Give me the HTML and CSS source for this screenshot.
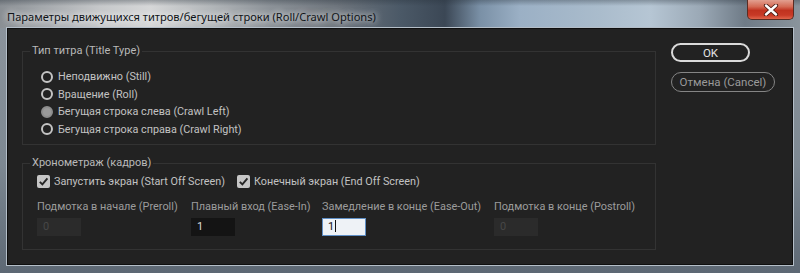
FILE: index.html
```html
<!DOCTYPE html>
<html lang="ru">
<head>
    <meta charset="UTF-8">
    <meta name="viewport" content="width=device-width, initial-scale=1.0">
    <title>Roll/Crawl Options</title>
    <link rel="stylesheet" href="styles.css">
</head>
<body>

    <div class="window">
        <div class="titlebar">
            <span class="title">Параметры движущихся титров/бегущей строки (Roll/Crawl Options)</span>
            <button type="button" class="close" aria-label="Close">
                <svg width="16" height="12" viewBox="0 0 16 12">
                    <path d="M3 1.5 L13 10.5 M13 1.5 L3 10.5" stroke="#4a1a12" stroke-width="4.2" stroke-linecap="round"/>
                    <path d="M3 1.5 L13 10.5 M13 1.5 L3 10.5" stroke="#ffffff" stroke-width="2.4" stroke-linecap="round"/>
                </svg>
            </button>
        </div>

        <div class="client">
            <div class="groups">
                <fieldset class="group type-group">
                    <legend>Тип титра (Title Type)</legend>
                    <div class="options">
                        <label class="radio"><span class="dot"></span>Неподвижно (Still)</label>
                        <label class="radio"><span class="dot"></span>Вращение (Roll)</label>
                        <label class="radio"><span class="dot selected"></span>Бегущая строка слева (Crawl Left)</label>
                        <label class="radio"><span class="dot"></span>Бегущая строка справа (Crawl Right)</label>
                    </div>
                </fieldset>

                <fieldset class="group timing-group">
                    <legend>Хронометраж (кадров)</legend>
                    <div class="checks">
                        <label class="check">
                            <span class="box">
                                <svg width="13" height="13" viewBox="0 0 13 13"><path d="M2.8 6.8 L5.4 9.4 L10.4 3.4" fill="none" stroke="#262626" stroke-width="1.9"/></svg>
                            </span>
                            Запустить экран (Start Off Screen)
                        </label>
                        <label class="check">
                            <span class="box">
                                <svg width="13" height="13" viewBox="0 0 13 13"><path d="M2.8 6.8 L5.4 9.4 L10.4 3.4" fill="none" stroke="#262626" stroke-width="1.9"/></svg>
                            </span>
                            Конечный экран (End Off Screen)
                        </label>
                    </div>

                    <div class="fields">
                        <div class="field-col">
                            <span class="field-label">Подмотка в начале (Preroll)</span>
                            <div class="field disabled">0</div>
                        </div>
                        <div class="field-col">
                            <span class="field-label">Плавный вход (Ease-In)</span>
                            <div class="field">1</div>
                        </div>
                        <div class="field-col">
                            <span class="field-label">Замедление в конце (Ease-Out)</span>
                            <div class="field focused">1<span class="caret"></span></div>
                        </div>
                        <div class="field-col">
                            <span class="field-label">Подмотка в конце (Postroll)</span>
                            <div class="field disabled">0</div>
                        </div>
                    </div>
                </fieldset>
            </div>

            <div class="buttons">
                <button type="button" class="btn ok">OK</button>
                <button type="button" class="btn cancel">Отмена (Cancel)</button>
            </div>
        </div>
    </div>

</body>
</html>
```

FILE: styles.css
```css
body {
    margin: 0;
    font-family: Roboto, "Noto Sans", sans-serif;
    background: #6f7a84;
}

.window {
    width: 800px;
    height: 273px;
    overflow: hidden;
    background: linear-gradient(180deg, #8e969e 0%, #7d8892 60%, #5d6874 100%);
}

/* blurred aero glass behind the caption */
.titlebar {
    height: 28px;
    display: flex;
    align-items: flex-start;
    background:
        linear-gradient(180deg, rgba(40, 50, 60, 0.35) 0px, rgba(40, 50, 60, 0) 6px),
        linear-gradient(90deg, #8a8f94 0px, #a3a7ab 40px, #c6c8ca 100px, #d6d7d8 150px, #b3b7ba 210px,
            #8c9298 270px, #6c737b 340px, #4b5967 400px, #3b4755 445px, #7a90a6 480px, #9bb0c5 520px,
            #aabccc 600px, #b6c6d4 650px, #9ba9b6 700px, #6f7b87 745px, #8a949c 800px);
}

.title {
    padding: 9px 0 0 7px;
    font-family: "Noto Sans", sans-serif;
    font-size: 11.1px;
    line-height: 16px;
    color: #101418;
    text-shadow: 0 0 6px rgba(255, 255, 255, 0.9), 0 0 10px rgba(255, 255, 255, 0.6);
    white-space: nowrap;
}

.close {
    margin-left: auto;
    margin-right: 6px;
    width: 47px;
    height: 20px;
    padding: 0;
    border: 1px solid #5b2c22;
    border-top: none;
    border-radius: 0 0 5px 5px;
    background: linear-gradient(180deg, #e2a090 0%, #d46a54 35%, #c0321f 55%, #c83a26 80%, #e0644a 100%);
    display: flex;
    align-items: center;
    justify-content: center;
}

.client {
    box-sizing: border-box;
    height: 237px;
    margin: 0 7px;
    display: flex;
    background: #222222;
    border: 1px solid #0f0f0f;
    box-shadow: 0 0 0 1px #b4bec8;
}

.groups {
    width: 634px;
    margin-left: 14px;
    padding-top: 15px;
}

.group {
    margin: 0;
    padding: 0;
    min-width: 0;
    border: 1px solid #333333;
}

.group legend {
    margin-left: 7px;
    padding: 0 2px;
    font-size: 11px;
    line-height: 14px;
    color: #b9b9b9;
}

.type-group {
    padding: 10px 0 6px 0;
}

.options {
    padding-left: 18px;
}

.radio {
    height: 17.5px;
    display: flex;
    align-items: center;
    font-size: 10.8px;
    color: #c2c2c2;
}

.dot {
    box-sizing: border-box;
    width: 12px;
    height: 12px;
    margin-right: 5px;
    border: 2px solid #c4c4c4;
    border-radius: 50%;
}

.dot.selected {
    border-color: #8e8e8e;
    background: #9a9a9a;
}

.timing-group {
    margin-top: 11px;
    padding: 2px 0 13px 0;
}

.checks {
    display: grid;
    grid-template-columns: 200px auto;
    padding-left: 14px;
}

.check {
    height: 18px;
    display: flex;
    align-items: center;
    font-size: 10.8px;
    color: #c2c2c2;
}

.box {
    width: 13px;
    height: 13px;
    margin-right: 4px;
    border-radius: 2px;
    background: #c6c6c6;
}

.box svg {
    display: block;
}

.fields {
    display: grid;
    grid-template-columns: 154px 131px 172px auto;
    margin-top: 10px;
    padding-left: 14px;
}

.field-label {
    display: block;
    font-size: 10.9px;
    line-height: 14px;
    color: #9c9c9c;
    white-space: nowrap;
}

.field {
    box-sizing: border-box;
    width: 44px;
    height: 18px;
    margin-top: 4px;
    padding-left: 6px;
    font-size: 11px;
    line-height: 18px;
    color: #dcdcdc;
    background: #141414;
}

.field.disabled {
    color: #474747;
    background: #2b2b2b;
}

.field.focused {
    line-height: 16px;
    padding-left: 5px;
    color: #111111;
    background: #eef2f6;
    border: 1px solid #5f8fc6;
}

.caret {
    display: inline-block;
    width: 1px;
    height: 12px;
    margin-left: 1px;
    vertical-align: -2px;
    background: #111111;
}

.buttons {
    display: flex;
    flex-direction: column;
    align-items: flex-start;
    margin-left: 15px;
    padding-top: 14px;
}

.btn {
    padding: 0;
    background: transparent;
    font-family: Roboto, "Noto Sans", sans-serif;
    font-size: 11.5px;
    border-radius: 10px;
    cursor: pointer;
}

.btn.ok {
    width: 79px;
    height: 19px;
    border: 2px solid #dadada;
    color: #e4e4e4;
}

.btn.cancel {
    width: 104px;
    height: 20px;
    margin-top: 10px;
    border: 1.5px solid #858585;
    color: #9a9a9a;
}
```
